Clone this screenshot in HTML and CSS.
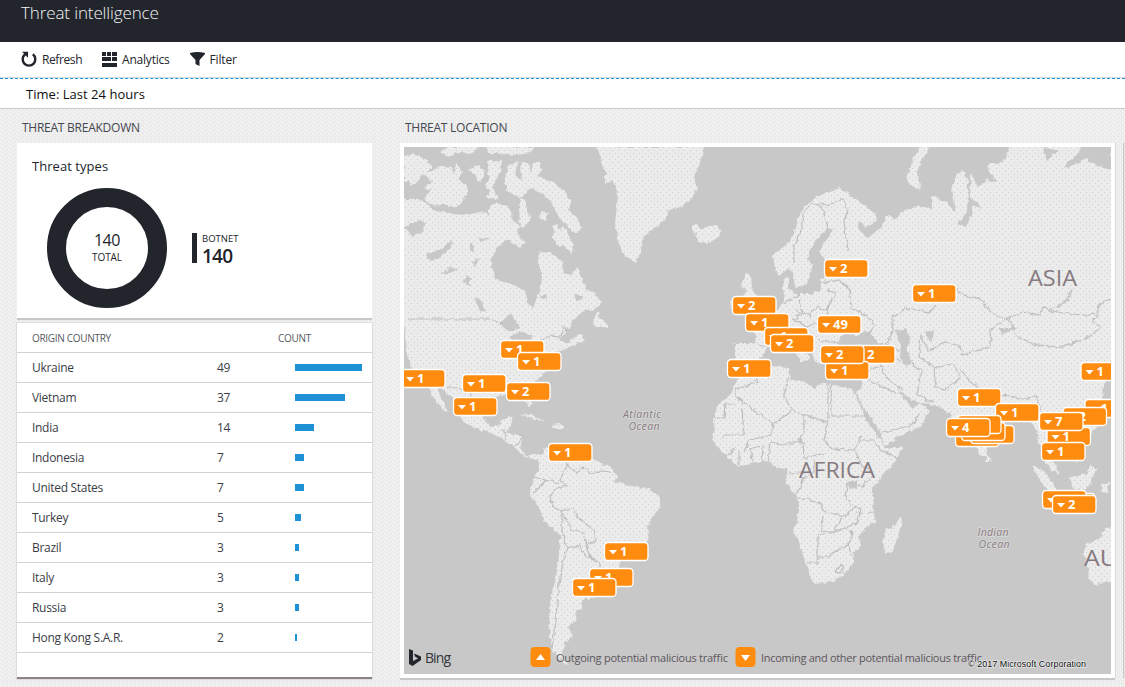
FILE: index.html
```html
<!DOCTYPE html>
<html lang="en">
<head>
<meta charset="utf-8">
<title>Threat intelligence</title>
<link rel="stylesheet" href="styles.css">
</head>
<body>
<div class="app">
<header class="header"><h1 class="title">Threat intelligence</h1></header>
<nav class="toolbar">
  <a class="tool refresh"><svg width="16" height="17" viewBox="0 0 16 17"><path d="M4.2 3.3A6.3 6.3 0 1 0 11.8 3.3" fill="none" stroke="#22252c" stroke-width="2.4"/><path d="M1 .8H7V6.8Z" fill="#22252c"/></svg><span>Refresh</span></a>
  <a class="tool analytics"><svg width="15" height="15" viewBox="0 0 15 15" fill="#22252c"><path d="M0 0h4v4H0zM5 0h4v4H5zM10 0h5v4h-5zM0 5h9v1H0zM10 5h5v1h-5zM0 6h9v3H0zM10 6h5v3h-5zM0 11h15v4H0z"/></svg><span>Analytics</span></a>
  <a class="tool filter"><svg width="15" height="15" viewBox="0 0 15 15" fill="#22252c"><path d="M0 1Q7.500-1 15 1V2L9.500 8V14L5.500 12V8L0 2Z"/></svg><span>Filter</span></a>
</nav>
<div class="time">Time: Last 24 hours</div>
<main class="content">
  <section class="breakdown">
    <h2 class="section-title st-break">THREAT BREAKDOWN</h2>
    <div class="card types">
      <h3 class="card-title">Threat types</h3>
      <div class="types-body">
        <div class="donut"><span class="donut-num">140</span><span class="donut-label">TOTAL</span></div>
        <div class="legend"><span class="legend-label">BOTNET</span><span class="legend-num">140</span></div>
      </div>
    </div>
    <div class="card table">
      <div class="row head"><span>ORIGIN COUNTRY</span><span class="h-count">COUNT</span></div>
      <div class="row"><span>Ukraine</span><span>49</span><i class="bar" style="width:67px"></i></div>
      <div class="row"><span>Vietnam</span><span>37</span><i class="bar" style="width:50px"></i></div>
      <div class="row"><span>India</span><span>14</span><i class="bar" style="width:19px"></i></div>
      <div class="row"><span>Indonesia</span><span>7</span><i class="bar" style="width:9px"></i></div>
      <div class="row"><span>United States</span><span>7</span><i class="bar" style="width:9px"></i></div>
      <div class="row"><span>Turkey</span><span>5</span><i class="bar" style="width:6px"></i></div>
      <div class="row"><span>Brazil</span><span>3</span><i class="bar" style="width:4px"></i></div>
      <div class="row"><span>Italy</span><span>3</span><i class="bar" style="width:4px"></i></div>
      <div class="row"><span>Russia</span><span>3</span><i class="bar" style="width:4px"></i></div>
      <div class="row"><span>Hong Kong S.A.R.</span><span>2</span><i class="bar" style="width:2px"></i></div>
    </div>
  </section>
  <section class="location">
    <h2 class="section-title st-loc">THREAT LOCATION</h2>
    <div class="card map-card">
<svg class="map" width="707" height="527" viewBox="404 147 707 527">
<defs>
  <filter id="coast" x="-2%" y="-2%" width="104%" height="104%"><feTurbulence type="fractalNoise" baseFrequency=".2" numOctaves="2" seed="4"/><feDisplacementMap in="SourceGraphic" scale="5" xChannelSelector="R" yChannelSelector="G"/></filter>
  <pattern id="dots" width="6" height="6" patternUnits="userSpaceOnUse"><rect width="1" height="1" fill="#c8c8c8"/><rect x="3" y="3" width="1" height="1" fill="#c8c8c8"/></pattern>
  <g id="pin"><rect x=".5" y=".5" width="43.500" height="18" rx="3.500" fill="#ff8c0f" stroke="#fff" stroke-width="1.300"/><path d="M5 8h8l-4 4.500z" fill="#fff"/></g>
</defs>
<g filter="url(#coast)">
<g class="land">
  <!-- North America -->
  <path d="M400 199H417L427 204L434 211L447 208L453 214L467 215L480 212L489 215L489 206L497 203L507 206L512 213L513 222L520 226L519 206L522 197L527 202L527 212L533 218L524 226L517 227L516 240L505 241L497 248L491 259L491 268L497 280L512 284L526 291L527 303L533 309L536 300L541 287L542 276L538 262L540 252L551 253L561 261L564 273L571 275L577 268L583 280L587 290L595 293L602 303L595 309L581 312L574 320L566 332L559 340L566 344L579 334L585 339L576 345L562 351L557 350L552 358L549 368L540 377L532 384L527 392L533 404L529 406L523 396L513 393L498 396L486 400L482 410L485 422L492 427L500 425L504 418L513 417L510 426L507 433L520 435L523 438L520 449L527 456L535 454L540 457L536 460L525 457L516 448L506 441L491 433L480 430L465 423L460 416L457 405L447 393L440 387L436 386L442 400L449 412L443 410L434 398L430 389L419 380L411 367L406 352L405 335L404 322H400Z"/>
  <!-- Arctic islands -->
  <path d="M404 156L417 154L429 161L431 168L422 177L413 185L404 181ZM423 174L440 167L452 168L454 175L456 162L462 171L459 180L467 186L467 195L460 205L451 209L444 203L438 206L429 203L424 198L431 190L424 188L432 182ZM468 170L478 164L484 172L482 183L477 181L475 174ZM487 161L502 160L500 171L496 180L493 186L497 199L487 197L491 190L484 188L489 180ZM505 176L510 164L518 162L516 176L521 180L520 163L529 163L531 174L533 163L540 163L543 172L536 176L553 182L562 188L571 201L569 210L579 221L582 229L573 232L566 225L559 218L552 203L543 193L531 188L520 198L510 193L505 185ZM552 226L558 224L561 231L564 226L569 236L574 245L571 254L564 246L559 248L551 236L555 233ZM514 233L518 230L520 238L525 241L519 248L511 242ZM440 151L450 147H480L471 154L460 152L447 156ZM485 147L534 147L531 153L517 155L490 153ZM541 211L549 213L546 221L540 218ZM592 322L598 312L600 320L607 322L608 328L593 325Z"/>
  <!-- Greenland and Iceland -->
  <path d="M597 147L601 158L605 172L605 184L612 180L618 192L617 207L615 222L619 244L625 256L636 262L642 248L644 236L656 227L665 220L669 210L678 208L692 199L697 188L694 177L700 163L704 147ZM691 226L697 224L700 229L709 226L717 225L721 232L717 238L707 244L699 242L695 235Z"/>
  <!-- Cuba, Hispaniola -->
  <path d="M520 414L531 415L546 421L535 420ZM551 425L561 424L564 428L552 428ZM526 400L531 400L532 406L529 405Z"/>
  <!-- South America -->
  <path d="M538 456L545 449L553 445L590 457L601 464L612 468L617 476L614 482L621 483L635 487L650 489L660 497L660 507L651 519L648 530L647 542L640 550L628 555L621 563L614 573L600 590L594 599L583 599L582 608L575 612L577 619L568 627L573 635L565 643L561 653L568 665L574 668L562 662L553 651L550 636L549 615L552 594L556 578L559 555L560 535L545 522L540 510L530 493L533 478L539 470Z"/>
  <!-- Africa -->
  <path d="M739 376L735 385L730 395L718 405L713 418L715 428L712 438L717 446L726 455L738 466L752 464L766 461L776 467L786 468L787 485L795 494L799 505L797 521L793 531L800 545L806 565L811 578L815 584L831 582L843 575L853 562L854 552L861 546L859 536L866 527L875 522L873 502L873 487L884 474L895 462L904 446L885 449L880 439L866 420L860 405L852 389L835 386L822 382L815 389L805 383L790 379L789 367L770 366L749 373ZM901 516L902 524L895 544L891 554L885 553L883 541L886 529L894 526Z"/>
  <!-- Europe and Asia -->
  <path d="M773 255L790 242L796 225L803 207L815 198L830 191L840 188L850 195L862 203L875 214L876 221L867 227L857 221L860 232L868 238L880 228L888 215L893 220L905 210L920 206L932 208L931 196L945 202L956 212L951 190L956 175L963 170L968 180L968 195L967 213L957 224L966 227L972 212L972 204L982 210L981 207L970 197L971 172L978 188L986 180L997 182L988 170L989 163L1003 163L1010 145H1115V375H1105L1103 398L1106 410L1101 424L1088 435L1076 436L1084 452L1077 462L1065 455L1053 445L1054 462L1059 475L1050 469L1042 455L1037 432L1031 422L1022 414L1010 419L998 427L989 444L986 457L979 455L968 430L955 426L951 414L935 405L915 402L900 391L897 389L905 400L913 408L920 403L929 411L921 426L904 434L884 446L880 431L868 415L856 393L859 390L864 378L866 371L852 371L840 371L829 367L823 355L823 363L816 365L813 355L803 344L799 342L804 350L810 359L802 362L796 353L788 345L778 347L768 347L761 357L754 364L745 366L735 362L735 343L755 343L757 336L749 326L762 321L775 312L784 301L783 280L789 277L789 289L796 294L812 294L821 290L820 280L828 275L850 272L828 263L820 253L824 242L833 231L829 227L819 237L810 248L808 259L812 265L807 284L795 288L793 273L788 268L779 276L775 270Z"/>
  <path d="M921 145H932L923 159L917 174L921 190L909 184L907 176L912 162ZM747 273L752 278L750 287L756 294L764 300L764 311L746 313L741 301L746 290L741 285ZM732 299L739 300L737 311L730 308Z"/>
  <!-- South-east Asia and Australia -->
  <path d="M1031 465L1043 471L1053 483L1058 493L1049 492L1039 478ZM1070 478L1086 474L1091 464L1096 469L1091 483L1085 490L1074 489ZM1100 484L1111 482L1106 487L1109 494L1103 492ZM987 454L991 461L987 461ZM1052 497L1080 502L1098 505L1070 503ZM1106 528L1115 527V581L1095 585L1089 580L1088 568L1083 554L1087 544L1100 538Z"/>
</g>
<g class="water">
  <path d="M1083 145L1075 156L1063 168L1077 164L1085 158L1095 164L1111 170V145ZM1042 147L1048 160L1055 153L1060 151ZM838 347L840 337L848 331L857 336L868 330L873 337L884 346L866 348L851 350ZM895 331L907 328L910 340L907 347L912 363L906 367L900 357L901 345ZM926 332L934 330L932 342L926 338ZM1072 288L1069 300L1058 308L1053 308L1066 299ZM998 328L1019 328L1002 334ZM848 482L857 480L857 488L850 489ZM798 437L803 440L800 445Z"/>
  <path d="M404 227L415 221L426 222L423 231L413 236ZM427 254L439 250L452 240L451 248L438 259L427 260ZM441 273L450 268L459 269L444 274ZM465 274L472 278L469 286L464 282ZM474 298L482 300L486 312L480 311ZM500 323L510 314L521 328L508 332ZM508 338L520 331L533 337L526 344ZM574 294L584 298L577 302ZM432 210L455 206L475 208L460 213ZM470 245L473 243L474 252L470 250ZM478 236L490 240L480 241ZM540 296L546 294L547 300ZM470 262L480 258L476 266Z"/>
</g>
<g class="borders">
  <path d="M407 319H490L502 324M540 340L551 336L560 337L563 327L568 330M447 387L454 387L469 390L476 404M499 431L505 430L506 440M517 432L523 438L514 447"/>
  <path d="M563 447L567 466L560 480L568 486L556 488L550 497L553 506L561 511L573 508L577 517L594 530L596 541L586 545L583 533L573 531L562 512L562 532L567 548L563 562L558 590L556 620L552 648M567 464L577 473L583 467L590 473L601 471L612 472M533 477L546 480L533 493M546 480L560 483M586 545L590 557L600 563L600 570M567 548L580 545L585 555L596 561"/>
  <path d="M735 396H736V389L757 382L753 375M736 397L773 424L792 411L784 395L788 378M714 418H724L725 404H735M742 408L744 435L722 435M773 424L771 435L750 440L744 451M792 411L804 414L828 423V384M831 384L832 416H865M804 414L804 429L800 442L781 445L772 441M828 423L824 440L831 449L854 450L862 435M803 442L804 458L826 453M728 455L735 448M739 465L739 451M753 464L750 449L760 446M762 463L763 445M768 461L770 442M788 474L813 472L815 460M795 493L801 488L803 479L812 475M797 498L808 499L820 504L824 512L846 516L854 507L861 509L858 522L848 527L832 532L822 531L823 515M842 517L833 533L818 534V563L806 563M818 558L830 556L838 550L848 545L853 534L845 528M848 545L852 555M873 476L862 486L848 482L845 496L852 506M857 513L874 512M855 450L860 463L873 474M862 440L874 440L880 450L897 458M836 571L841 565L844 568L839 573Z"/>
  <path d="M794 263V245L800 234L803 215L812 203L822 207L828 228M812 203L830 205L843 199L848 209L844 221L848 251M784 303L800 294M796 311L810 315L818 306L826 311M820 283L840 280L849 289L852 308M826 289L836 294L829 305L826 317M852 308L867 316L874 326L866 337M800 298L802 312L794 320L806 327L818 322M757 345L768 347M772 319L779 326L775 340M818 340L830 342L838 344M821 352L834 350M884 343L899 350M862 374L875 368L881 366L887 378L902 390M866 378L873 382L897 394M883 432L901 428L913 425L920 412M880 365L886 350L900 362M893 330V317L905 308L930 312L936 305M912 364L921 370L917 395L934 403M934 368L953 364L961 377L945 390L936 387L934 368L919 355L921 336L929 351L945 342L960 346L962 355L980 350L991 345L990 330L1007 318L999 317L988 309L978 297L968 298L955 289M886 347L893 330M1007 319L1024 312L1040 315L1043 306L1052 311L1070 314L1085 315L1097 314L1100 303L1111 299M1009 319L1017 336L1035 345L1058 347L1085 339L1100 328L1093 320L1099 315M1034 346L1041 345L1062 348L1075 343M960 368L972 384L981 388L1000 394L1020 399L1036 397L1041 410M974 404L976 383"/>
</g>
</g>
<rect x="404" y="147" width="707" height="527" fill="url(#dots)" opacity=".8"/>
<g class="continent"><text x="799" y="478" textLength="76" lengthAdjust="spacingAndGlyphs">AFRICA</text><text x="1028" y="286" textLength="49" lengthAdjust="spacingAndGlyphs">ASIA</text><text x="1084" y="566" textLength="34" lengthAdjust="spacingAndGlyphs">AU</text></g>
<g class="ocean"><text x="642" y="418" textLength="38">Atlantic</text><text x="644" y="430" textLength="31">Ocean</text><text x="993" y="536" textLength="31">Indian</text><text x="994" y="548" textLength="31">Ocean</text></g>
<g class="pins">
  <g transform="translate(824 259)"><use href="#pin"/><text x="16" y="14">2</text></g>
  <g transform="translate(912 284)"><use href="#pin"/><text x="16" y="14">1</text></g>
  <g transform="translate(732 296)"><use href="#pin"/><text x="16" y="14">2</text></g>
  <g transform="translate(745 313)"><use href="#pin"/><text x="16" y="14">1</text></g>
  <g transform="translate(764 327)"><use href="#pin"/><text x="16" y="14">1</text></g>
  <g transform="translate(770 334)"><use href="#pin"/><text x="16" y="14">2</text></g>
  <g transform="translate(817 315)"><use href="#pin"/><text x="16" y="14">49</text></g>
  <g transform="translate(851 345)"><use href="#pin"/><text x="16" y="14">2</text></g>
  <g transform="translate(825 361)"><use href="#pin"/><text x="16" y="14">1</text></g>
  <g transform="translate(820 345)"><use href="#pin"/><text x="16" y="14">2</text></g>
  <g transform="translate(727 359)"><use href="#pin"/><text x="16" y="14">1</text></g>
  <g transform="translate(500 340)"><use href="#pin"/><text x="16" y="14">1</text></g>
  <g transform="translate(517 352)"><use href="#pin"/><text x="16" y="14">1</text></g>
  <g transform="translate(401 369)"><use href="#pin"/><text x="16" y="14">1</text></g>
  <g transform="translate(462 374)"><use href="#pin"/><text x="16" y="14">1</text></g>
  <g transform="translate(506 382)"><use href="#pin"/><text x="16" y="14">2</text></g>
  <g transform="translate(453 397)"><use href="#pin"/><text x="16" y="14">1</text></g>
  <g transform="translate(548 443)"><use href="#pin"/><text x="16" y="14">1</text></g>
  <g transform="translate(604 542)"><use href="#pin"/><text x="16" y="14">1</text></g>
  <g transform="translate(589 568)"><use href="#pin"/><text x="16" y="14">1</text></g>
  <g transform="translate(572 578)"><use href="#pin"/><text x="16" y="14">1</text></g>
  <g transform="translate(1080.500 362)"><use href="#pin"/><text x="16" y="14">1</text></g>
  <g transform="translate(957 388)"><use href="#pin"/><text x="16" y="14">1</text></g>
  <g transform="translate(995 403)"><use href="#pin"/><text x="16" y="14">1</text></g>
  <use href="#pin" x="955" y="428"/>
  <use href="#pin" x="970" y="425"/>
  <use href="#pin" x="961" y="422"/>
  <use href="#pin" x="957" y="415"/>
  <g transform="translate(946 418)"><use href="#pin"/><text x="16" y="14">4</text></g>
  <g transform="translate(1084.500 399)"><use href="#pin"/><text x="16" y="14">1</text></g>
  <g transform="translate(1062.500 407)"><use href="#pin"/><text x="16" y="14">2</text></g>
  <g transform="translate(1046.500 427)"><use href="#pin"/><text x="16" y="14">1</text></g>
  <g transform="translate(1039 412)"><use href="#pin"/><text x="16" y="14">7</text></g>
  <g transform="translate(1041 442)"><use href="#pin"/><text x="16" y="14">1</text></g>
  <use href="#pin" x="1051" y="493"/>
  <g transform="translate(1042 490)"><use href="#pin"/><text x="16" y="14">1</text></g>
  <g transform="translate(1052 495)"><use href="#pin"/><text x="16" y="14">2</text></g>
</g>
<g class="key">
  <path d="M409 649L413 650.500V661L418 658.500L415 656.500L414 653.500L421 656.500V660L412.500 666L409 664Z" fill="#22252c"/>
  <text class="bing" x="425" y="663" textLength="26">Bing</text>
  <rect x="530.500" y="647" width="20" height="20" rx="4" fill="#ff8c0f"/><path d="M536 660h9l-4.500-6z" fill="#fff"/>
  <text x="556" y="662" textLength="172">Outgoing potential malicious traffic</text>
  <rect x="735.500" y="647" width="20" height="20" rx="4" fill="#ff8c0f"/><path d="M741 655h9l-4.500 6z" fill="#fff"/>
  <text x="761" y="662" textLength="221">Incoming and other potential malicious traffic</text>
  <text class="copyright" x="968" y="667" textLength="118">© 2017 Microsoft Corporation</text>
</g>
</svg>
    </div>
  </section>
  <aside class="next-card"></aside>
</main>
</div>
</body>
</html>
```
FILE: styles.css
```css
* { box-sizing: border-box; }
body { margin: 0; background: #ebebeb; color: #22252c; font-family: "Open Sans", "Noto Sans", sans-serif; font-size: 12px; }
h1, h2, h3 { margin: 0; font-weight: 400; }
.app { display: flex; flex-direction: column; height: 687px; overflow: hidden; }
.header { height: 42px; flex: none; background: #22252c; padding-left: 21px; }
.title { color: #f4f4f4; font-size: 17px; font-weight: 300; line-height: 26px; letter-spacing: -.12px; }
.toolbar { height: 36px; flex: none; display: flex; align-items: center; gap: 20px; padding-left: 21px; background: #fff; border-bottom: 1px solid #d5dde2; }
.tool { display: flex; align-items: center; gap: 5px; letter-spacing: -.4px; }
.analytics { letter-spacing: -.22px; }
.filter { letter-spacing: -.15px; }
.time { height: 31px; flex: none; background: #fff; border-top: 1px dashed #1e91d6; border-bottom: 1px solid #c8c8c8; padding-left: 26px; font-size: 13px; line-height: 31px; letter-spacing: .03px; color: #111; }
.content { flex: 1; display: flex; padding-left: 17px; background-color: #ebebeb; background-image: radial-gradient(circle at .5px .5px, #fff .55px, transparent .6px), radial-gradient(circle at 2.5px 2.5px, #fff .55px, transparent .6px); background-size: 4px 4px; }
.section-title { height: 34px; font-size: 12px; line-height: 37px; letter-spacing: -.25px; color: #454850; padding-left: 5px; }
.breakdown { width: 355px; }
.card { background: #fff; }
.types { height: 177px; border-bottom: 2px solid #c8c8c8; padding: 11px 15px; }
.card-title { font-size: 13px; line-height: 24px; letter-spacing: .05px; }
.types-body { display: flex; align-items: center; gap: 25px; padding: 10px 0 0 15px; }
.donut { width: 120px; height: 120px; border: 19.5px solid #22252c; border-radius: 50%; display: flex; flex-direction: column; align-items: center; justify-content: center; }
.donut-num { font-size: 16px; line-height: 17px; letter-spacing: -.4px; font-weight: 500; }
.donut-label { font-size: 10px; line-height: 16px; letter-spacing: -.1px; }
.legend { height: 30px; border-left: 5px solid #22252c; padding-left: 5px; display: flex; flex-direction: column; }
.legend-label { font-size: 9.5px; line-height: 11px; }
.legend-num { font-size: 19px; line-height: 24px; letter-spacing: -.75px; font-weight: 600; }
.table { height: 356px; margin-top: 3px; border-bottom: 2px solid #8a8284; box-shadow: 0 0 0 1px #ddd; }
.row { height: 30px; border-bottom: 1px solid #d3d3d3; display: grid; grid-template-columns: 185px 78px 67px; align-items: center; padding-left: 15px; letter-spacing: -.3px; color: #3a3d45; }
.head { font-size: 10px; color: #55585e; }
.h-count { grid-column: 2 / 4; padding-left: 61px; }
.bar { height: 7px; background: #1e91d6; }
.location { width: 715px; margin-left: 28px; }
.map-card { padding: 4px; height: 535px; box-shadow: 0 2px 0 #c8c8c8, 1px 0 0 #d8d8d8; }
.map { display: block; background: #c8c8c8; }
.land { fill: #ebebeb; }
.water { fill: #c8c8c8; }
.borders { fill: none; stroke: #bebebe; stroke-width: 1.2; }
.continent { font-size: 22px; fill: #867a80; }
.ocean { font-size: 10.5px; font-style: italic; fill: #867a80; text-anchor: middle; stroke: #dadada; stroke-width: 1.5px; paint-order: stroke; }
.pins { font-size: 13px; font-weight: 700; fill: #fff; }
.key { font-size: 11px; fill: #5c565c; }
.bing { font-size: 14px; fill: #33353c; }
.copyright { font-family: "Liberation Sans", Arial, sans-serif; font-size: 9px; fill: #111; stroke: #e6e6e6; stroke-width: 1.5px; paint-order: stroke; }
.next-card { width: 2px; margin: 34px 0 9px 8px; background: #e4e4e4; border-left: 1px solid #c8c8c8; }
```
